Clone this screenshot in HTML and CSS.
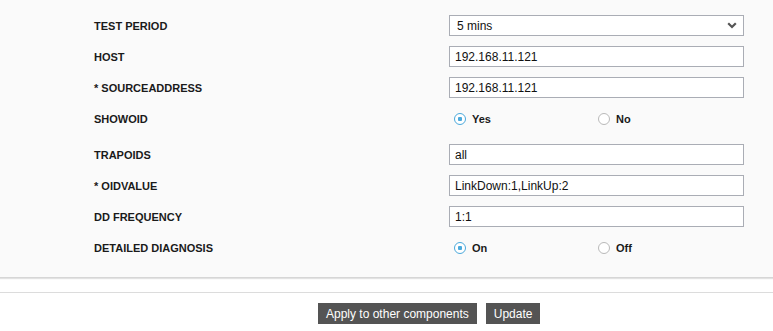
FILE: index.html
```html
<!DOCTYPE html>
<html lang="en">
  <head>
    <meta charset="UTF-8" />
    <meta name="viewport" content="width=device-width, initial-scale=1.0" />
    <title>Test configuration</title>
    <link rel="stylesheet" href="styles.css">
  </head>
  <body>
    <form class="panel" action="">
      <div class="row">
        <label>TEST PERIOD</label>
        <div class="select-wrap">
          <select name="period">
            <option>5 mins</option>
            <option>10 mins</option>
            <option>15 mins</option>
          </select>
          <svg class="chevron" width="10" height="7" viewBox="0 0 10 7">
            <path d="M1.2 1.2 L5 5 L8.8 1.2" fill="none" stroke="#555" stroke-width="2.2" />
          </svg>
        </div>
      </div>
      <div class="row">
        <label>HOST</label>
        <input type="text" name="host" value="192.168.11.121" />
      </div>
      <div class="row">
        <label>* SOURCEADDRESS</label>
        <input type="text" name="source" value="192.168.11.121" />
      </div>
      <div class="row radio-row">
        <label>SHOWOID</label>
        <div class="choices">
          <label class="choice"><input type="radio" name="showoid" checked /> Yes</label>
          <label class="choice"><input type="radio" name="showoid" /> No</label>
        </div>
      </div>
      <div class="row">
        <label>TRAPOIDS</label>
        <input type="text" name="trapoids" value="all" />
      </div>
      <div class="row">
        <label>* OIDVALUE</label>
        <input type="text" name="oidvalue" value="LinkDown:1,LinkUp:2" />
      </div>
      <div class="row">
        <label>DD FREQUENCY</label>
        <input type="text" name="ddfreq" value="1:1" />
      </div>
      <div class="row radio-row">
        <label>DETAILED DIAGNOSIS</label>
        <div class="choices">
          <label class="choice"><input type="radio" name="diag" checked /> On</label>
          <label class="choice"><input type="radio" name="diag" /> Off</label>
        </div>
      </div>
    </form>
    <div class="actions">
      <button>Apply to other components</button>
      <button>Update</button>
    </div>
  </body>
</html>
```
FILE: styles.css
```css
* {
  margin: 0;
  padding: 0;
  box-sizing: border-box;
}
body {
  background: #fff;
  font-family: "Liberation Sans", Arial, sans-serif;
  color: #1a1a1a;
}
.panel {
  background: #fafafa;
  padding: 15px 0 14px 94px;
  border-bottom: 1px solid #d6d6d6;
  box-shadow: 0 1px 1px #e2e2e2;
}
.row {
  display: grid;
  grid-template-columns: 355px 295px;
  align-items: center;
  height: 21px;
  margin-bottom: 10px;
}
.row > label {
  font-size: 11px;
  font-weight: bold;
}
.row input[type="text"],
.row select {
  width: 295px;
  height: 21px;
  border: 1px solid #aaadb5;
  background: #fff;
  font-family: "Liberation Sans", Arial, sans-serif;
  font-size: 12px;
  color: #111;
  padding: 0 5px;
  outline: none;
}
.select-wrap {
  position: relative;
}
.row select {
  appearance: none;
  -webkit-appearance: none;
  padding-left: 7px;
}
.chevron {
  position: absolute;
  right: 7px;
  top: 7px;
}
.radio-row {
  height: 26px;
  padding-bottom: 4px;
}
.radio-row:last-child {
  margin-bottom: 0;
}
.choices {
  display: flex;
  padding-left: 5px;
}
.choice {
  display: flex;
  align-items: center;
  gap: 6px;
  width: 144px;
  font-size: 11px;
  font-weight: bold;
}
.choice input {
  appearance: none;
  -webkit-appearance: none;
  width: 12px;
  height: 12px;
  border-radius: 50%;
  border: 1px solid #b9b9b9;
  background: #fff;
  margin: 0;
}
.choice input:checked {
  border-color: #4aa9dc;
  background: radial-gradient(circle, #4aa9dc 0, #4aa9dc 2px, #fff 2.5px);
}
.actions {
  margin-top: 14px;
  border-top: 1px solid #dcdcdc;
  padding: 10px 0 0 318px;
  display: flex;
  gap: 9px;
}
.actions button {
  height: 21px;
  padding: 0 8px;
  background: #545454;
  color: #fff;
  border: none;
  font-family: "Liberation Sans", Arial, sans-serif;
  font-size: 12px;
  cursor: pointer;
}
```
